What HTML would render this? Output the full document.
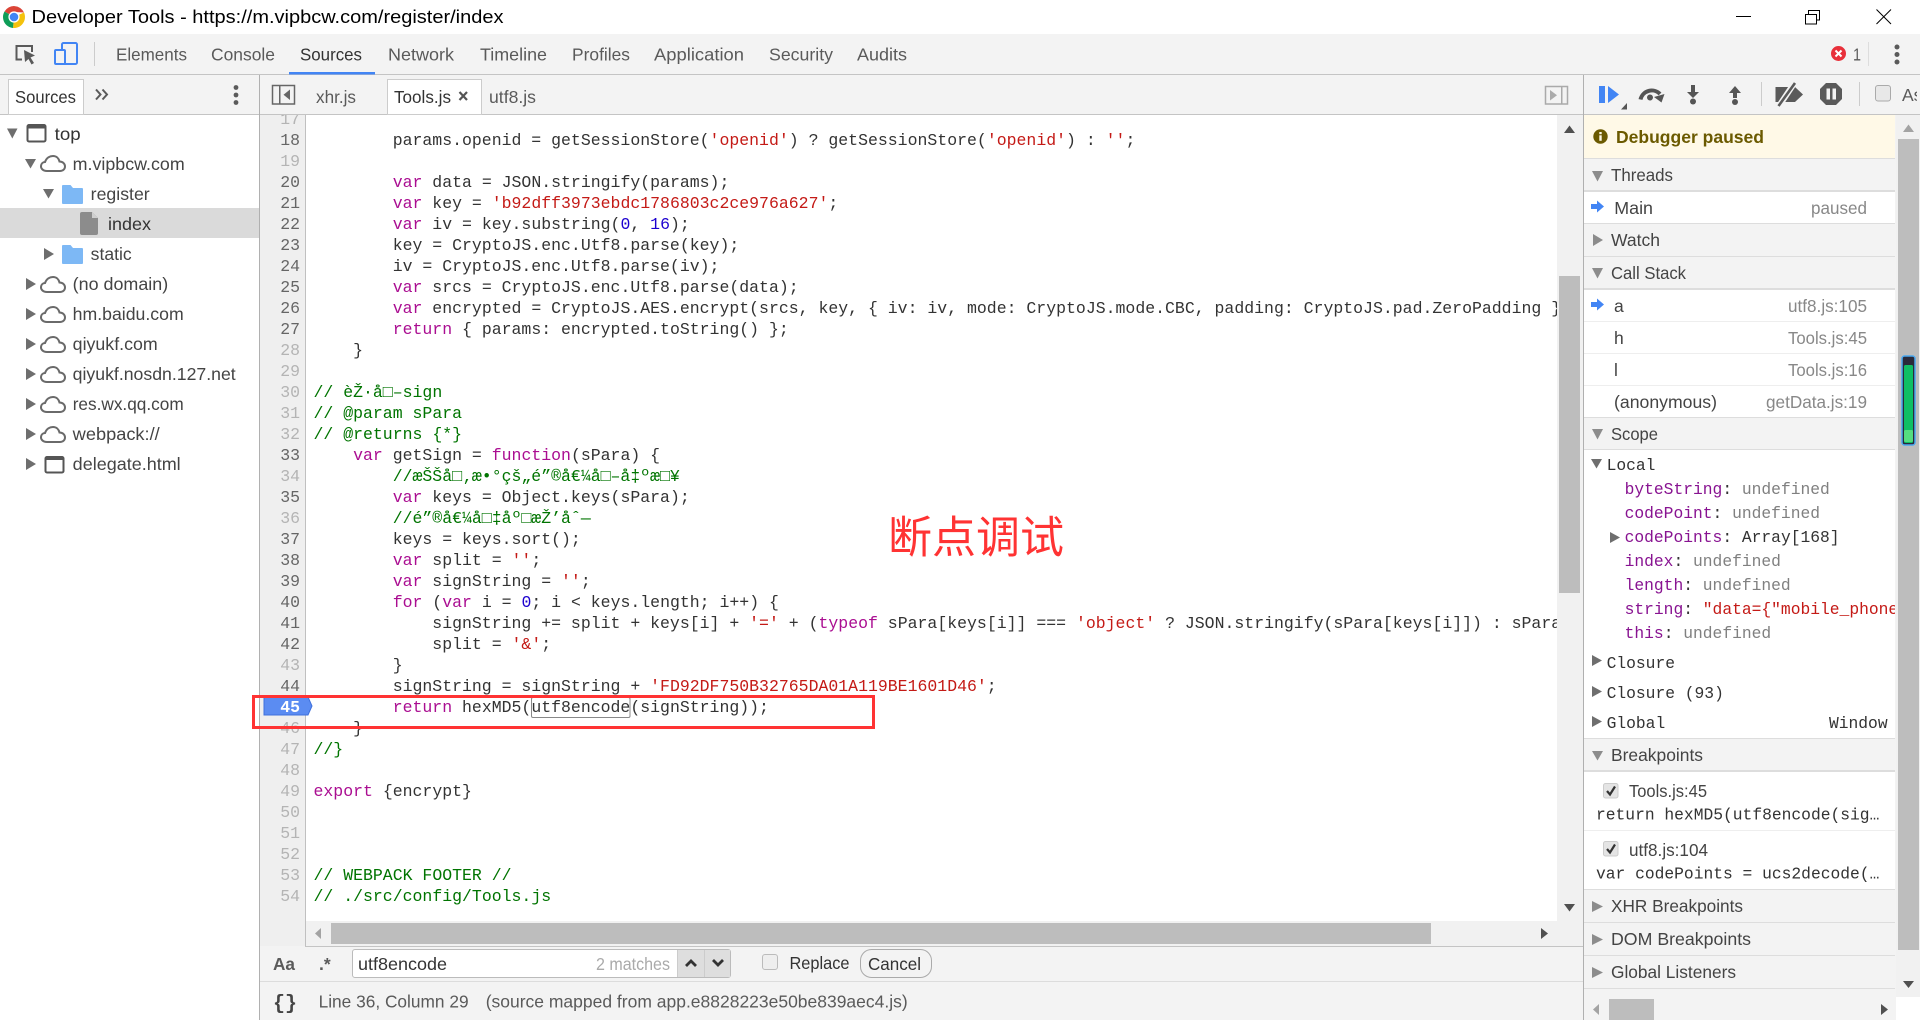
<!DOCTYPE html>
<html><head><meta charset="utf-8"><title>Developer Tools</title>
<style>
html,body{margin:0;padding:0;background:#fff;overflow:hidden}
svg{display:block}
text{white-space:pre}
.s{font:17.5px "Liberation Sans",sans-serif;fill:#5a5a5a}
.d{font:17.5px "Liberation Sans",sans-serif;fill:#333}
.g{font:17.5px "Liberation Sans",sans-serif;fill:#888}
.t{font:17.5px "Liberation Sans",sans-serif;fill:#444}
.m{font:16.5px "Liberation Mono",monospace;fill:#333}
.n{font:16.5px "Liberation Mono",monospace;fill:#666;text-anchor:end}
.l{font:16.5px "Liberation Mono",monospace;fill:#b4b4b4;text-anchor:end}
.v{font:16.3px "Liberation Mono",monospace;fill:#333}
.k{fill:#aa0d91}.r{fill:#c41a16}.b{fill:#1c00cf}.c{fill:#007400}
.p{fill:#881391}.u{fill:#808080}
.a{fill:#6e6e6e}.h{fill:#8c8c8c}
</style></head><body>
<svg xmlns="http://www.w3.org/2000/svg" width="1920" height="1020" viewBox="0 0 1920 1020">
<defs>
<clipPath id="codeclip"><rect x="306" y="115" width="1251" height="806"/></clipPath>
<clipPath id="gutclip"><rect x="260" y="115" width="46" height="806"/></clipPath>
<clipPath id="scopeclip"><rect x="1584" y="450" width="311" height="288"/></clipPath>
<clipPath id="asclip"><rect x="1895" y="80" width="22" height="30"/></clipPath>
<symbol id="cloud" viewBox="0 0 26 17" overflow="visible"><path d="M7 16C2.500 16 .8 13 1 11C1.200 8.500 3 7 5 7C6.500 2.500 10 1 13 1C16.500 1 18.800 3.500 19.500 6.500C23 6.500 25 9 25 11.500C25 14 23 16 20 16Z" fill="none" stroke="#6a6a6a" stroke-width="2"/></symbol>
<symbol id="folder" viewBox="0 0 21 19" overflow="visible"><path d="M1 0H8.500L11 3H20Q21 3 21 4V18Q21 19 20 19H1Q0 19 0 18V1Q0 0 1 0Z" fill="#7db8f5"/></symbol>
</defs>

<!-- title bar -->
<rect width="1920" height="34" fill="#fff"/>
<path d="M14 17L4.500 11.500A11 11 0 0 1 24 12.500L14 12Z" fill="#db4437"/>
<path d="M14 17L24 12.500A11 11 0 0 1 13 28Z" fill="#f4c20d"/>
<path d="M14 17L13 28A11 11 0 0 1 4.500 11.500Z" fill="#0f9d58"/>
<circle cx="14" cy="17" r="5.600" fill="#fff"/><circle cx="14" cy="17" r="4.300" fill="#4285f4"/>
<text x="31.500" y="23" font-family="Liberation Sans" font-size="18" fill="#000" textLength="472" lengthAdjust="spacingAndGlyphs">Developer Tools - https://m.vipbcw.com/register/index</text>
<path d="M1736 16.500H1751" stroke="#000" stroke-width="1"/>
<path d="M1805.500 14.500h11v9.500h-11zM1808.500 14.500v-4h11v9.500h-3" fill="none" stroke="#000" stroke-width="1"/>
<path d="M1876.500 9.500L1891 24M1891 9.500L1876.500 24" stroke="#000" stroke-width="1"/>

<!-- main toolbar -->
<rect y="34" width="1920" height="986" fill="#f3f3f3"/>
<rect y="74" width="1920" height="1" fill="#c4c4c4"/>
<path d="M22 59.500H16.500V46H32V52" fill="none" stroke="#5a5a5a" stroke-width="2"/>
<path d="M24 50L35 55.500L30.500 57.500L34 63L31.500 64.500L28.500 59L25 62Z" fill="#5a5a5a"/>
<rect x="62" y="43" width="15" height="21" rx="1.500" fill="none" stroke="#4285f4" stroke-width="2"/>
<rect x="55" y="50" width="10" height="14" rx="1" fill="#f3f3f3" stroke="#4285f4" stroke-width="2"/>
<rect x="94" y="42" width="1" height="24" fill="#ccc"/>
<text class="s" y="60.500" x="116" textLength="71" lengthAdjust="spacingAndGlyphs">Elements</text>
<text class="s" y="60.500" x="211" textLength="64" lengthAdjust="spacingAndGlyphs">Console</text>
<text class="d" y="60.500" x="300" textLength="62" lengthAdjust="spacingAndGlyphs">Sources</text>
<text class="s" y="60.500" x="388" textLength="66" lengthAdjust="spacingAndGlyphs">Network</text>
<text class="s" y="60.500" x="480" textLength="67" lengthAdjust="spacingAndGlyphs">Timeline</text>
<text class="s" y="60.500" x="572" textLength="58" lengthAdjust="spacingAndGlyphs">Profiles</text>
<text class="s" y="60.500" x="654" textLength="90" lengthAdjust="spacingAndGlyphs">Application</text>
<text class="s" y="60.500" x="769" textLength="64" lengthAdjust="spacingAndGlyphs">Security</text>
<text class="s" y="60.500" x="857" textLength="50" lengthAdjust="spacingAndGlyphs">Audits</text>
<rect x="289" y="72" width="86" height="2.500" fill="#4285f4"/>
<circle cx="1838.500" cy="53.500" r="7.500" fill="#e8303a"/>
<path d="M1835.500 50.500L1841.500 56.500M1841.500 50.500L1835.500 56.500" stroke="#fff" stroke-width="2"/>
<text class="s" x="1853" y="60.500" textLength="8" lengthAdjust="spacingAndGlyphs">1</text>
<rect x="1868" y="42" width="1" height="24" fill="#ddd"/>
<circle cx="1897" cy="47" r="2.500" fill="#5a5a5a"/><circle cx="1897" cy="54.500" r="2.500" fill="#5a5a5a"/><circle cx="1897" cy="62" r="2.500" fill="#5a5a5a"/>

<!-- second toolbar -->
<rect y="114" width="1920" height="1" fill="#c4c4c4"/>
<rect x="8.500" y="79.500" width="75" height="35" fill="#fff" stroke="#ccc"/>
<text class="d" x="15" y="103" textLength="61" lengthAdjust="spacingAndGlyphs">Sources</text>
<path d="M96 89.500L100.500 94.500L96 99.500M102.500 89.500L107 94.500L102.500 99.500" fill="none" stroke="#5a5a5a" stroke-width="2"/>
<circle cx="236" cy="87.500" r="2.400" fill="#5a5a5a"/><circle cx="236" cy="95" r="2.400" fill="#5a5a5a"/><circle cx="236" cy="102.500" r="2.400" fill="#5a5a5a"/>
<rect x="272.500" y="85.500" width="22" height="18.500" fill="none" stroke="#666" stroke-width="1.500"/>
<rect x="279" y="85.500" width="1.500" height="18.500" fill="#666"/>
<path d="M290 89.500V100L283.500 94.700Z" fill="#666"/>
<text class="s" x="316" y="103" textLength="40" lengthAdjust="spacingAndGlyphs">xhr.js</text>
<rect x="387.500" y="79.500" width="94" height="35" fill="#fff" stroke="#ccc"/>
<text class="d" x="394" y="103" textLength="57" lengthAdjust="spacingAndGlyphs">Tools.js</text>
<path d="M459.500 92L467 100M467 92L459.500 100" stroke="#555" stroke-width="2.200"/>
<text class="s" x="489" y="103" textLength="47" lengthAdjust="spacingAndGlyphs">utf8.js</text>
<rect x="1545.500" y="86.500" width="22" height="17.500" fill="none" stroke="#aaa" stroke-width="1.500"/>
<rect x="1561" y="86.500" width="1.500" height="17.500" fill="#aaa"/>
<path d="M1550 90V100.500L1557 95.200Z" fill="#aaa"/>

<!-- left sidebar -->
<rect x="0" y="115" width="259" height="905" fill="#fff"/>
<rect x="259" y="75" width="1" height="945" fill="#b0b0b0"/>
<rect x="0" y="208" width="259" height="30" fill="#dadada"/>
<path d="M7 128.500H17.500L12.300 138.500Z" class="a"/>
<rect x="27.500" y="125" width="18" height="16.500" rx="1.500" fill="none" stroke="#555" stroke-width="2"/><rect x="27" y="125" width="19" height="3.500" fill="#555"/>
<text class="d" x="54.700" y="140" textLength="26" lengthAdjust="spacingAndGlyphs">top</text>
<path d="M25 159H36L30.500 168.500Z" class="a"/>
<use href="#cloud" x="40" y="155" width="26" height="17"/>
<text class="t" x="72.700" y="170" textLength="112" lengthAdjust="spacingAndGlyphs">m.vipbcw.com</text>
<path d="M43 189H54L48.500 198.500Z" class="a"/>
<use href="#folder" x="62" y="185" width="21" height="19"/>
<text class="t" x="90.700" y="200" textLength="59" lengthAdjust="spacingAndGlyphs">register</text>
<path d="M80 214Q80 212 82 212H92L98 218V233Q98 235 96 235H82Q80 235 80 233Z" fill="#8c8c8c"/>
<path d="M92 212L98 218H92Z" fill="#cfcfcf"/>
<text class="d" x="108" y="230" textLength="43" lengthAdjust="spacingAndGlyphs">index</text>
<path d="M44 248V260L54 254Z" class="a"/>
<use href="#folder" x="62" y="245" width="21" height="19"/>
<text class="t" x="90.700" y="260" textLength="41" lengthAdjust="spacingAndGlyphs">static</text>
<path d="M26 278V290L36 284Z" class="a"/><use href="#cloud" x="40" y="276" width="26" height="17"/>
<text class="t" x="72.700" y="290" textLength="95.500" lengthAdjust="spacingAndGlyphs">(no domain)</text>
<path d="M26 308V320L36 314Z" class="a"/><use href="#cloud" x="40" y="306" width="26" height="17"/>
<text class="t" x="72.700" y="320" textLength="111" lengthAdjust="spacingAndGlyphs">hm.baidu.com</text>
<path d="M26 338V350L36 344Z" class="a"/><use href="#cloud" x="40" y="336" width="26" height="17"/>
<text class="t" x="72.700" y="350" textLength="85" lengthAdjust="spacingAndGlyphs">qiyukf.com</text>
<path d="M26 368V380L36 374Z" class="a"/><use href="#cloud" x="40" y="366" width="26" height="17"/>
<text class="t" x="72.700" y="380" textLength="163" lengthAdjust="spacingAndGlyphs">qiyukf.nosdn.127.net</text>
<path d="M26 398V410L36 404Z" class="a"/><use href="#cloud" x="40" y="396" width="26" height="17"/>
<text class="t" x="72.700" y="410" textLength="111" lengthAdjust="spacingAndGlyphs">res.wx.qq.com</text>
<path d="M26 428V440L36 434Z" class="a"/><use href="#cloud" x="40" y="426" width="26" height="17"/>
<text class="t" x="72.700" y="440" textLength="87" lengthAdjust="spacingAndGlyphs">webpack://</text>
<path d="M26 458V470L36 464Z" class="a"/>
<rect x="45.500" y="457" width="18" height="15.500" rx="1.500" fill="none" stroke="#555" stroke-width="2"/><rect x="45" y="457" width="19" height="3" fill="#555"/>
<text class="t" x="72.700" y="470" textLength="108" lengthAdjust="spacingAndGlyphs">delegate.html</text>

<!-- editor -->
<rect x="260" y="115" width="1297" height="806" fill="#fff"/>
<rect x="260" y="115" width="45" height="831" fill="#efefef"/>
<rect x="305" y="115" width="1" height="831" fill="#c0c0c0"/>
<g clip-path="url(#gutclip)"><g transform="translate(0,-1)">
<text class="l" x="300" y="125">17</text>
<text class="n" x="300" y="146">18</text>
<text class="l" x="300" y="167">19</text>
<text class="n" x="300" y="188">20</text>
<text class="n" x="300" y="209">21</text>
<text class="n" x="300" y="230">22</text>
<text class="n" x="300" y="251">23</text>
<text class="n" x="300" y="272">24</text>
<text class="n" x="300" y="293">25</text>
<text class="n" x="300" y="314">26</text>
<text class="n" x="300" y="335">27</text>
<text class="l" x="300" y="356">28</text>
<text class="l" x="300" y="377">29</text>
<text class="l" x="300" y="398">30</text>
<text class="l" x="300" y="419">31</text>
<text class="l" x="300" y="440">32</text>
<text class="n" x="300" y="461">33</text>
<text class="l" x="300" y="482">34</text>
<text class="n" x="300" y="503">35</text>
<text class="l" x="300" y="524">36</text>
<text class="n" x="300" y="545">37</text>
<text class="n" x="300" y="566">38</text>
<text class="n" x="300" y="587">39</text>
<text class="n" x="300" y="608">40</text>
<text class="n" x="300" y="629">41</text>
<text class="n" x="300" y="650">42</text>
<text class="l" x="300" y="671">43</text>
<text class="n" x="300" y="692">44</text>
<text class="l" x="300" y="734">46</text>
<text class="l" x="300" y="755">47</text>
<text class="l" x="300" y="776">48</text>
<text class="l" x="300" y="797">49</text>
<text class="l" x="300" y="818">50</text>
<text class="l" x="300" y="839">51</text>
<text class="l" x="300" y="860">52</text>
<text class="l" x="300" y="881">53</text>
<text class="l" x="300" y="902">54</text>
</g></g>
<path d="M264 697H308L312 706L308 715H264Z" fill="#5b8cf2" stroke="#3f70dc" stroke-width="1"/>
<text x="300" y="712" font-family="Liberation Mono" font-size="16.500" font-weight="bold" fill="#fff" text-anchor="end">45</text>
<rect x="531.500" y="697.500" width="98.500" height="20" rx="1.500" fill="#fff" stroke="#888"/>
<g clip-path="url(#codeclip)"><g transform="translate(0,-1)">
<text class="m" x="392.700" y="146">params.openid = getSessionStore(<tspan class="r">'openid'</tspan>) ? getSessionStore(<tspan class="r">'openid'</tspan>) : <tspan class="r">''</tspan>;</text>
<text class="m" x="392.700" y="188"><tspan class="k">var</tspan> data = JSON.stringify(params);</text>
<text class="m" x="392.700" y="209"><tspan class="k">var</tspan> key = <tspan class="r">'b92dff3973ebdc1786803c2ce976a627'</tspan>;</text>
<text class="m" x="392.700" y="230"><tspan class="k">var</tspan> iv = key.substring(<tspan class="b">0</tspan>, <tspan class="b">16</tspan>);</text>
<text class="m" x="392.700" y="251">key = CryptoJS.enc.Utf8.parse(key);</text>
<text class="m" x="392.700" y="272">iv = CryptoJS.enc.Utf8.parse(iv);</text>
<text class="m" x="392.700" y="293"><tspan class="k">var</tspan> srcs = CryptoJS.enc.Utf8.parse(data);</text>
<text class="m" x="392.700" y="314"><tspan class="k">var</tspan> encrypted = CryptoJS.AES.encrypt(srcs, key, { iv: iv, mode: CryptoJS.mode.CBC, padding: CryptoJS.pad.ZeroPadding });</text>
<text class="m" x="392.700" y="335"><tspan class="k">return</tspan> { params: encrypted.toString() };</text>
<text class="m" x="353.100" y="356">}</text>
<text class="m c" x="313.500" y="398">// èŽ·å□–sign</text>
<text class="m c" x="313.500" y="419">// @param sPara</text>
<text class="m c" x="313.500" y="440">// @returns {*}</text>
<text class="m" x="353.100" y="461"><tspan class="k">var</tspan> getSign = <tspan class="k">function</tspan>(sPara) {</text>
<text class="m c" x="392.700" y="482">//æŠŠå□‚æ•°çš„é”®å€¼å□–å‡ºæ□¥</text>
<text class="m" x="392.700" y="503"><tspan class="k">var</tspan> keys = Object.keys(sPara);</text>
<text class="m c" x="392.700" y="524">//é”®å€¼å□‡åº□æŽ’åˆ—</text>
<text class="m" x="392.700" y="545">keys = keys.sort();</text>
<text class="m" x="392.700" y="566"><tspan class="k">var</tspan> split = <tspan class="r">''</tspan>;</text>
<text class="m" x="392.700" y="587"><tspan class="k">var</tspan> signString = <tspan class="r">''</tspan>;</text>
<text class="m" x="392.700" y="608"><tspan class="k">for</tspan> (<tspan class="k">var</tspan> i = <tspan class="b">0</tspan>; i &lt; keys.length; i++) {</text>
<text class="m" x="432.300" y="629">signString += split + keys[i] + <tspan class="r">'='</tspan> + (<tspan class="k">typeof</tspan> sPara[keys[i]] === <tspan class="r">'object'</tspan> ? JSON.stringify(sPara[keys[i]]) : sPara[keys[i]]);</text>
<text class="m" x="432.300" y="650">split = <tspan class="r">'&amp;'</tspan>;</text>
<text class="m" x="392.700" y="671">}</text>
<text class="m" x="392.700" y="692">signString = signString + <tspan class="r">'FD92DF750B32765DA01A119BE1601D46'</tspan>;</text>
<text class="m" x="392.700" y="713"><tspan class="k">return</tspan> hexMD5(utf8encode(signString));</text>
<text class="m" x="353.100" y="734">}</text>
<text class="m c" x="313.500" y="755">//}</text>
<text class="m" x="313.500" y="797"><tspan class="k">export</tspan> {encrypt}</text>
<text class="m c" x="313.500" y="881">// WEBPACK FOOTER //</text>
<text class="m c" x="313.500" y="902">// ./src/config/Tools.js</text>
</g></g>

<!-- editor scrollbars -->
<rect x="1557" y="115" width="26" height="806" fill="#f1f1f1"/>
<rect x="1559" y="276" width="21" height="317" fill="#bdbdbd"/>
<path d="M1564 133H1575L1569.500 125.500Z" fill="#505050"/>
<path d="M1564 904H1575L1569.500 911.500Z" fill="#505050"/>
<rect x="306" y="921" width="1277" height="25" fill="#f1f1f1"/>
<rect x="331" y="923" width="1100" height="21" fill="#bdbdbd"/>
<path d="M321 928V939L315 933.500Z" fill="#a3a3a3"/>
<path d="M1541 928V939L1548 933.500Z" fill="#505050"/>
<rect x="1583" y="75" width="1" height="945" fill="#b0b0b0"/>

<!-- search bar -->
<rect x="260" y="946" width="1323" height="74" fill="#f3f3f3"/>
<rect x="305" y="946" width="1278" height="1" fill="#c4c4c4"/>
<rect x="260" y="981" width="1323" height="1" fill="#dcdcdc"/>
<text x="273" y="970" font-family="Liberation Sans" font-size="17.500" font-weight="bold" fill="#5a5a5a" textLength="22" lengthAdjust="spacingAndGlyphs">Aa</text>
<text x="319" y="970" font-family="Liberation Sans" font-size="17.500" font-weight="bold" fill="#5a5a5a">.*</text>
<rect x="352.500" y="949.500" width="378" height="28" rx="2.500" fill="#fff" stroke="#bbb"/>
<rect x="677" y="950" width="53" height="27" fill="#dedede"/>
<rect x="704" y="950" width="1" height="27" fill="#ccc"/><rect x="677" y="950" width="1" height="27" fill="#ccc"/>
<text class="d" x="358" y="970" textLength="89" lengthAdjust="spacingAndGlyphs">utf8encode</text>
<text class="s" x="596" y="970" style="fill:#aaa" textLength="74" lengthAdjust="spacingAndGlyphs">2 matches</text>
<path d="M686 966L691 961L696 966" fill="none" stroke="#333" stroke-width="2.800"/>
<path d="M713 960L718 965L723 960" fill="none" stroke="#333" stroke-width="2.800"/>
<rect x="762.500" y="954.500" width="15" height="15" rx="2.500" fill="#eee" stroke="#bbb"/>
<text class="d" x="789.500" y="969" textLength="60" lengthAdjust="spacingAndGlyphs">Replace</text>
<rect x="860.500" y="949.500" width="71" height="28" rx="11" fill="#f3f3f3" stroke="#aaa"/>
<text class="d" x="868" y="970" textLength="53" lengthAdjust="spacingAndGlyphs">Cancel</text>
<text x="273" y="1009" font-family="Liberation Mono" font-size="20" font-weight="bold" fill="#444" textLength="24" lengthAdjust="spacing">{}</text>
<text class="s" x="318.600" y="1007.500" textLength="150" lengthAdjust="spacingAndGlyphs">Line 36, Column 29</text>
<text class="s" x="485.700" y="1007.500" textLength="422" lengthAdjust="spacingAndGlyphs">(source mapped from app.e8828223e50be839aec4.js)</text>

<!-- right toolbar -->
<rect x="1599" y="86" width="6" height="17" fill="#4285f4"/>
<path d="M1608 86L1619 94.500L1608 103Z" fill="#4285f4"/>
<path d="M1627 103V109.500H1621Z" fill="#555"/>
<path d="M1640.500 99.500A11.500 11.500 0 0 1 1660 94" fill="none" stroke="#555" stroke-width="4"/>
<path d="M1654 97L1664.500 94L1661.500 102.500Z" fill="#555"/>
<circle cx="1650" cy="97.500" r="3" fill="#555"/>
<path d="M1691 85H1695V92H1699L1693 98L1687 92H1691Z" fill="#555"/><circle cx="1693" cy="101.500" r="3" fill="#555"/>
<path d="M1733 98H1737V93H1741L1735 86L1729 93H1733Z" fill="#555"/><circle cx="1735" cy="102" r="3" fill="#555"/>
<rect x="1761" y="82" width="1" height="24" fill="#ccc"/>
<path d="M1775.500 87H1795L1803 94.500L1795 102H1775.500Z" fill="#5a5a5a"/>
<path d="M1795 82L1779 106" stroke="#f3f3f3" stroke-width="6"/>
<path d="M1795 83L1778.500 106" stroke="#5a5a5a" stroke-width="2.600"/>
<path d="M1826 83H1836L1842 89V99L1836 105H1826L1820 99V89Z" fill="#5a5a5a"/>
<rect x="1826.500" y="88.500" width="3.500" height="11" fill="#f3f3f3"/><rect x="1832.500" y="88.500" width="3.500" height="11" fill="#f3f3f3"/>
<rect x="1859" y="82" width="1" height="24" fill="#ccc"/>
<rect x="1875.500" y="85.500" width="15" height="15.500" rx="2.500" fill="#e8e8e8" stroke="#aaa"/>
<g clip-path="url(#asclip)"><text class="s" x="1902" y="101">Async</text></g>

<!-- right panel -->
<rect x="1584" y="115" width="311" height="43" fill="#fff9e7"/>
<rect x="1584" y="158" width="311" height="1" fill="#ddd"/>
<circle cx="1600.500" cy="136.500" r="7.200" fill="#6b5a00"/>
<rect x="1599.300" y="132" width="2.400" height="2.200" fill="#fff9e7"/><rect x="1599.300" y="135.300" width="2.400" height="5.500" fill="#fff9e7"/>
<text x="1616" y="143" font-family="Liberation Sans" font-size="17.500" font-weight="bold" fill="#6b5a00" textLength="148" lengthAdjust="spacingAndGlyphs">Debugger paused</text>

<rect x="1584" y="190" width="311" height="2" fill="#ddd"/>
<rect x="1584" y="192" width="311" height="31" fill="#fff"/>
<rect x="1584" y="223" width="311" height="1" fill="#ddd"/>
<rect x="1584" y="256" width="311" height="1" fill="#ddd"/>
<rect x="1584" y="288" width="311" height="2" fill="#ddd"/>
<rect x="1584" y="290" width="311" height="127" fill="#fff"/>
<rect x="1584" y="321" width="311" height="1" fill="#eee"/>
<rect x="1584" y="353" width="311" height="1" fill="#eee"/>
<rect x="1584" y="385" width="311" height="1" fill="#eee"/>
<rect x="1584" y="417" width="311" height="1" fill="#ddd"/>
<rect x="1584" y="449" width="311" height="1" fill="#ddd"/>
<rect x="1584" y="450" width="311" height="289" fill="#fff"/>
<rect x="1584" y="738" width="311" height="1" fill="#ddd"/>
<rect x="1584" y="770" width="311" height="2" fill="#ddd"/>
<rect x="1584" y="772" width="311" height="117" fill="#fff"/>
<rect x="1584" y="830" width="311" height="1" fill="#eee"/>
<rect x="1584" y="889" width="311" height="1" fill="#ddd"/>
<rect x="1584" y="922" width="311" height="1" fill="#ddd"/>
<rect x="1584" y="955" width="311" height="1" fill="#ddd"/>
<rect x="1584" y="988" width="311" height="1" fill="#ddd"/>

<path d="M1592 171H1603L1597.500 181.500Z" class="h"/>
<text class="t" x="1611" y="181" textLength="62" lengthAdjust="spacingAndGlyphs">Threads</text>
<path d="M1591 204H1597V200.500L1604 206.500L1597 212.500V209H1591Z" fill="#4285f4"/>
<text class="t" x="1614.300" y="214" textLength="38.700" lengthAdjust="spacingAndGlyphs">Main</text>
<text class="g" x="1811" y="214" textLength="56" lengthAdjust="spacingAndGlyphs">paused</text>
<path d="M1593 234V246L1603 240Z" class="h"/>
<text class="t" x="1611" y="246" textLength="49" lengthAdjust="spacingAndGlyphs">Watch</text>
<path d="M1592 268H1603L1597.500 278.500Z" class="h"/>
<text class="t" x="1611" y="279" textLength="75" lengthAdjust="spacingAndGlyphs">Call Stack</text>
<path d="M1591 302H1597V298.500L1604 304.500L1597 310.500V307H1591Z" fill="#4285f4"/>
<text class="t" x="1614" y="312">a</text>
<text class="g" x="1788" y="312" textLength="79" lengthAdjust="spacingAndGlyphs">utf8.js:105</text>
<text class="t" x="1614" y="344">h</text>
<text class="g" x="1788" y="344" textLength="79" lengthAdjust="spacingAndGlyphs">Tools.js:45</text>
<text class="t" x="1614" y="376">l</text>
<text class="g" x="1788" y="376" textLength="79" lengthAdjust="spacingAndGlyphs">Tools.js:16</text>
<text class="t" x="1614" y="408" textLength="103" lengthAdjust="spacingAndGlyphs">(anonymous)</text>
<text class="g" x="1766" y="408" textLength="101" lengthAdjust="spacingAndGlyphs">getData.js:19</text>
<path d="M1592 429H1603L1597.500 439.500Z" class="h"/>
<text class="t" x="1611" y="440" textLength="47" lengthAdjust="spacingAndGlyphs">Scope</text>

<g clip-path="url(#scopeclip)">
<path d="M1591 459H1602L1596.500 468.500Z" class="a"/>
<path d="M1610 532V543L1620 537.500Z" class="a"/>
<path d="M1592 655V666L1602 660.500Z" class="a"/>
<path d="M1592 686V697L1602 691.500Z" class="a"/>
<path d="M1592 716V727L1602 721.500Z" class="a"/>
<g transform="translate(-.4,-.8)">
<text class="v" x="1607" y="471">Local</text>
<text class="v" x="1625" y="495"><tspan class="p">byteString</tspan>: <tspan class="u">undefined</tspan></text>
<text class="v" x="1625" y="519"><tspan class="p">codePoint</tspan>: <tspan class="u">undefined</tspan></text>
<text class="v" x="1625" y="543"><tspan class="p">codePoints</tspan>: Array[168]</text>
<text class="v" x="1625" y="567"><tspan class="p">index</tspan>: <tspan class="u">undefined</tspan></text>
<text class="v" x="1625" y="591"><tspan class="p">length</tspan>: <tspan class="u">undefined</tspan></text>
<text class="v" x="1625" y="615"><tspan class="p">string</tspan>: <tspan class="r">"data={"mobile_phone":"</tspan></text>
<text class="v" x="1625" y="639"><tspan class="p">this</tspan>: <tspan class="u">undefined</tspan></text>
<text class="v" x="1607" y="669">Closure</text>
<text class="v" x="1607" y="699">Closure (93)</text>
<text class="v" x="1607" y="729">Global</text>
<text class="v" x="1888" y="729" text-anchor="end">Window</text>
</g>
</g>

<path d="M1592 751H1603L1597.500 760.500Z" class="h"/>
<text class="t" x="1611" y="761" textLength="92" lengthAdjust="spacingAndGlyphs">Breakpoints</text>
<rect x="1603.500" y="783.500" width="14.500" height="14.500" rx="2" fill="#e4e4e4" stroke="#ccc"/>
<path d="M1607 791L1610 794.500L1615 786.500" fill="none" stroke="#333" stroke-width="2.200"/>
<text class="t" x="1629" y="797" textLength="78" lengthAdjust="spacingAndGlyphs">Tools.js:45</text>
<text class="v" x="1596" y="819.300">return hexMD5(utf8encode(sig…</text>
<rect x="1603.500" y="841.500" width="14.500" height="14.500" rx="2" fill="#e4e4e4" stroke="#ccc"/>
<path d="M1607 849L1610 852.500L1615 844.500" fill="none" stroke="#333" stroke-width="2.200"/>
<text class="t" x="1629" y="856" textLength="79" lengthAdjust="spacingAndGlyphs">utf8.js:104</text>
<text class="v" x="1596" y="878.300">var codePoints = ucs2decode(…</text>

<path d="M1592 901V912L1603 906.500Z" class="h"/>
<text class="t" x="1611" y="912" textLength="132" lengthAdjust="spacingAndGlyphs">XHR Breakpoints</text>
<path d="M1592 934V945L1603 939.500Z" class="h"/>
<text class="t" x="1611" y="945" textLength="140" lengthAdjust="spacingAndGlyphs">DOM Breakpoints</text>
<path d="M1592 967V978L1603 972.500Z" class="h"/>
<text class="t" x="1611" y="978" textLength="125" lengthAdjust="spacingAndGlyphs">Global Listeners</text>

<!-- right panel scrollbars -->
<rect x="1609" y="999" width="45" height="21" fill="#bdbdbd"/>
<path d="M1599 1004V1015L1593 1009.500Z" fill="#a3a3a3"/>
<path d="M1881 1004V1015L1888 1009.500Z" fill="#505050"/>
<rect x="1896" y="115" width="24" height="882" fill="#f1f1f1"/>
<rect x="1896" y="997" width="24" height="23" fill="#fff"/>
<rect x="1898" y="139" width="21" height="811" fill="#bdbdbd"/>
<path d="M1903 132H1914L1908.500 124.500Z" fill="#a3a3a3"/>
<path d="M1903 981H1914L1908.500 988Z" fill="#505050"/>
<rect x="1902" y="356" width="13" height="89" rx="2.500" fill="#2a2a3a" stroke="#4aa8f0" stroke-width="1.500"/>
<rect x="1904" y="365" width="9" height="78" rx="1.500" fill="#10bf64"/>
<rect x="1904" y="430" width="9" height="12" rx="1.500" fill="#55dd80"/>

<!-- annotations -->
<text x="888" y="552.500" font-family="Noto Sans CJK SC" font-size="44" fill="#ff3333">断点调试</text>
<rect x="253.500" y="696.500" width="620" height="31" fill="none" stroke="#ff3333" stroke-width="3"/>
</svg>
</body></html>
